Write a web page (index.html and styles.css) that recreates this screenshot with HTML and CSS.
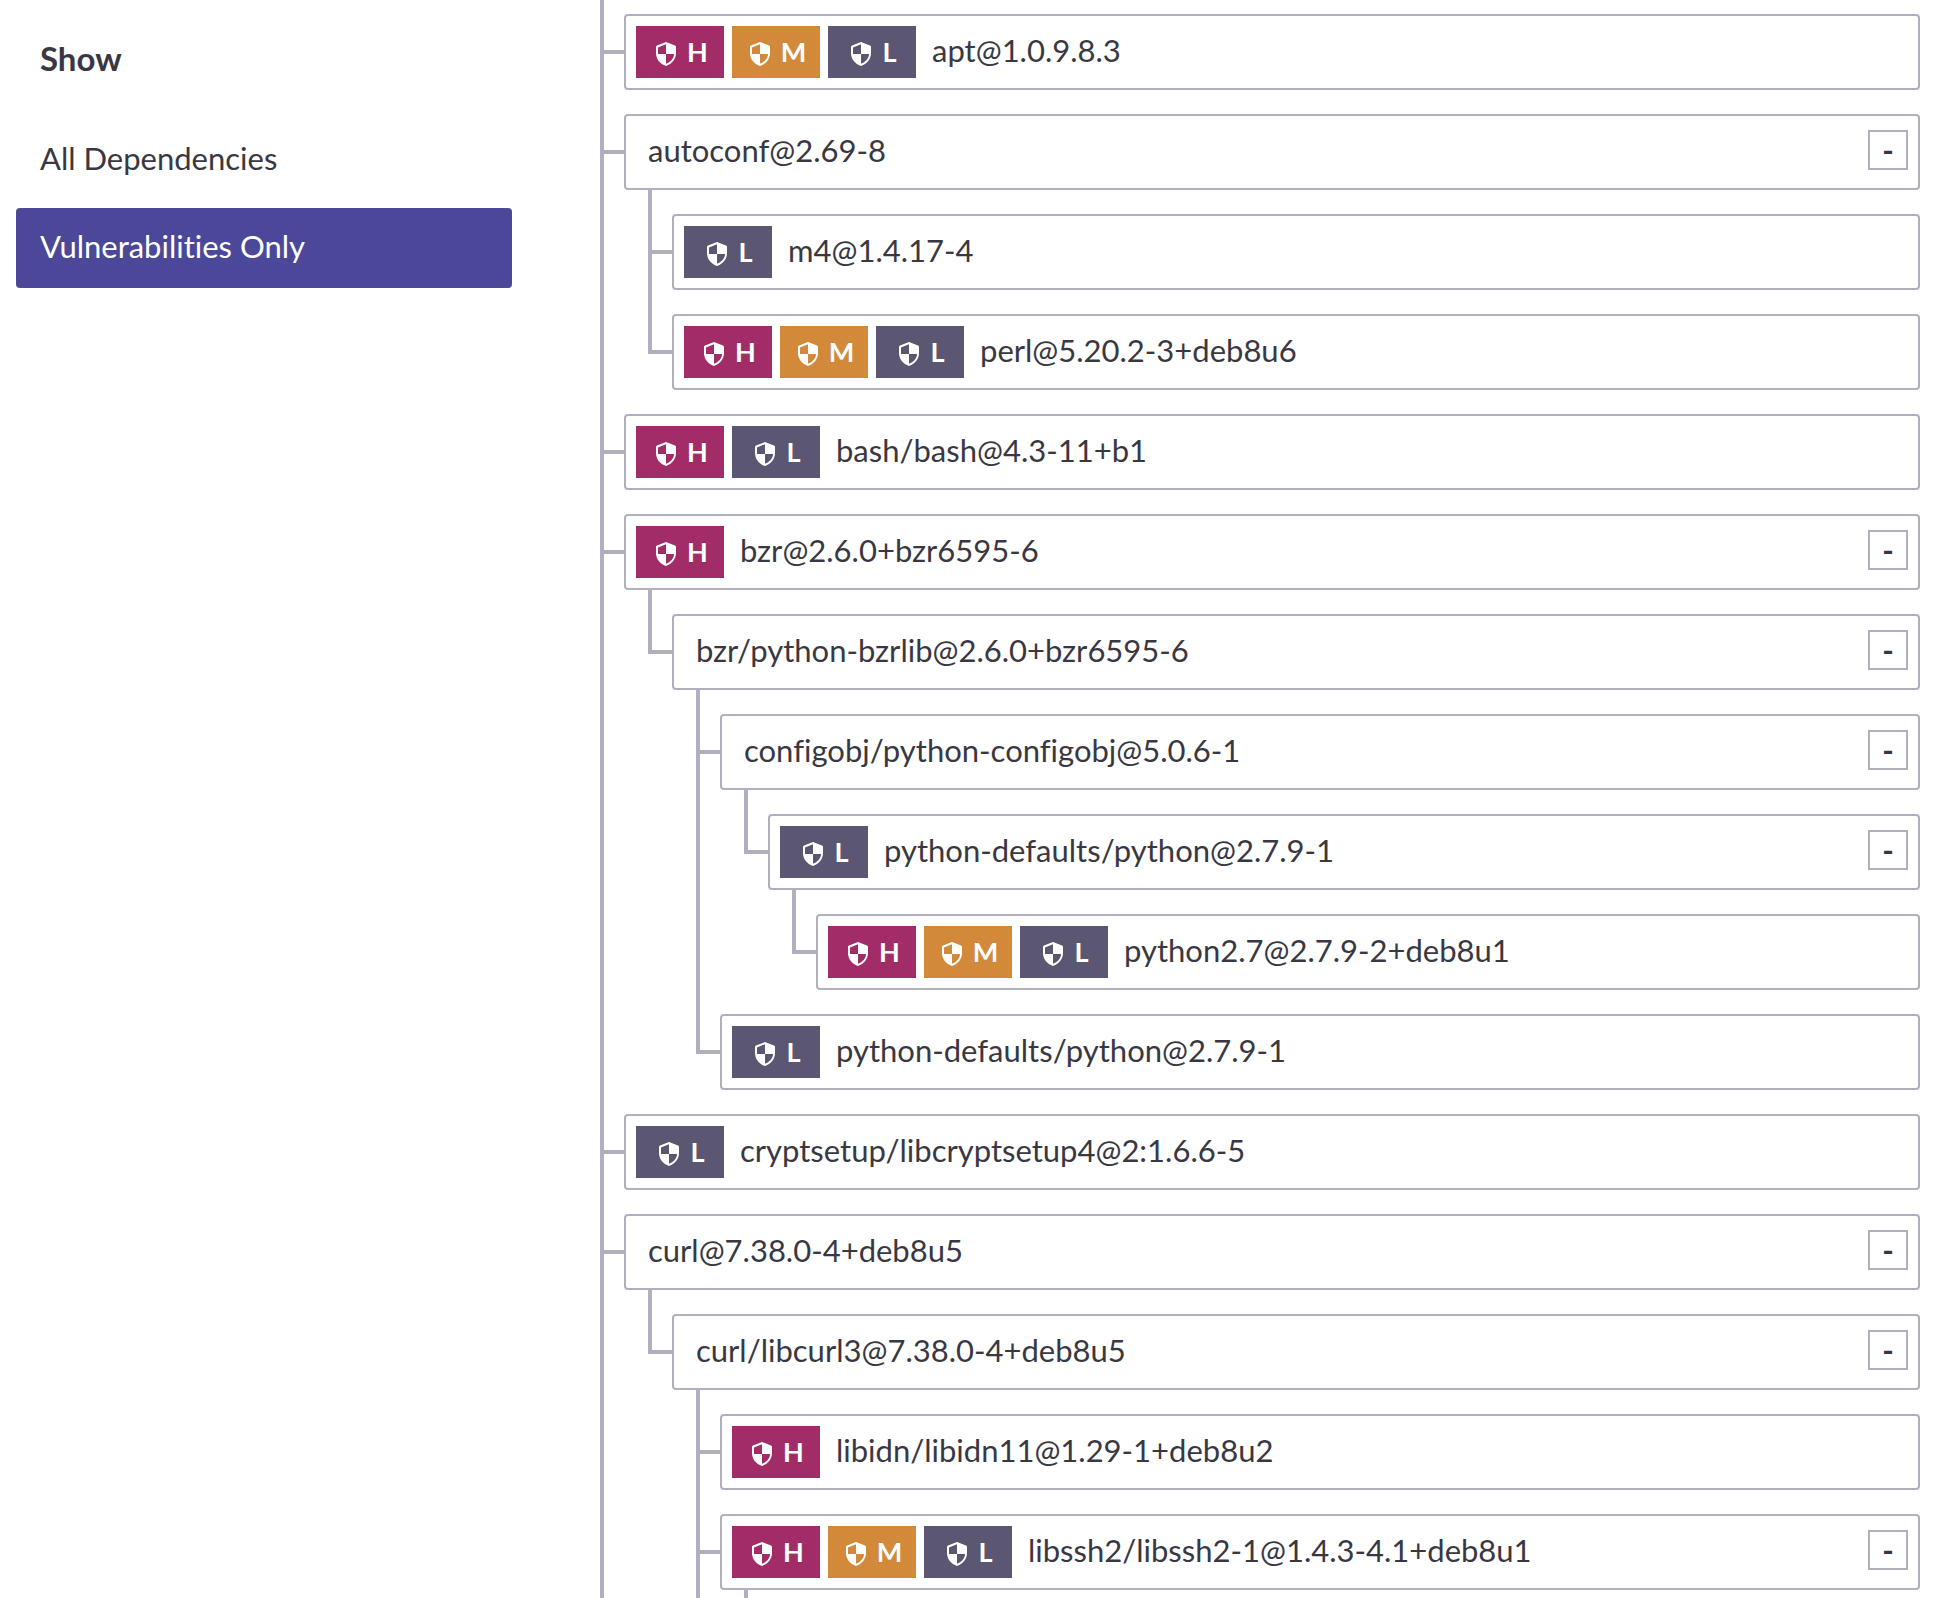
FILE: index.html
```html
<!DOCTYPE html>
<html lang="en">
<head>
<meta charset="utf-8">
<meta name="viewport" content="width=device-width, initial-scale=1">
<title>Dependencies</title>
<link rel="stylesheet" href="styles.css">
</head>
<body>
<svg class="sprite" aria-hidden="true">
  <symbol id="shield" viewBox="0 0 20 24">
    <path fill="currentColor" fill-rule="evenodd" d="M10 0 L19 3.6 Q20 4 20 5 V11 C20 17 16 22 10 24 C4 22 0 17 0 11 V5 Q0 4 1 3.6 Z M10 2.2 L2 5.4 V12 H10 Z M10 12 V21.8 C14.5 20 18 16.500 18 12 Z"/>
  </symbol>
</svg>
<div class="page">
  <nav class="sidebar" aria-labelledby="show-title">
    <h2 class="sidebar-title" id="show-title">Show</h2>
    <a class="filter" href="#all">All Dependencies</a>
    <a class="filter filter-active" href="#vulnerable" aria-current="true">Vulnerabilities Only</a>
  </nav>
  <main>
    <ul class="tree tree-root">
      <li class="node">
        <div class="card">
          <span class="badge high"><svg class="icon"><use href="#shield"/></svg>H</span>
          <span class="badge medium"><svg class="icon"><use href="#shield"/></svg>M</span>
          <span class="badge low"><svg class="icon"><use href="#shield"/></svg>L</span>
          <span class="name">apt@1.0.9.8.3</span>
        </div>
      </li>
      <li class="node">
        <div class="card">
          <span class="name">autoconf@2.69-8</span>
          <button class="toggle" type="button" aria-label="Collapse">-</button>
        </div>
        <ul class="tree">
          <li class="node">
            <div class="card">
              <span class="badge low"><svg class="icon"><use href="#shield"/></svg>L</span>
              <span class="name">m4@1.4.17-4</span>
            </div>
          </li>
          <li class="node">
            <div class="card">
              <span class="badge high"><svg class="icon"><use href="#shield"/></svg>H</span>
              <span class="badge medium"><svg class="icon"><use href="#shield"/></svg>M</span>
              <span class="badge low"><svg class="icon"><use href="#shield"/></svg>L</span>
              <span class="name">perl@5.20.2-3+deb8u6</span>
            </div>
          </li>
        </ul>
      </li>
      <li class="node">
        <div class="card">
          <span class="badge high"><svg class="icon"><use href="#shield"/></svg>H</span>
          <span class="badge low"><svg class="icon"><use href="#shield"/></svg>L</span>
          <span class="name">bash/bash@4.3-11+b1</span>
        </div>
      </li>
      <li class="node">
        <div class="card">
          <span class="badge high"><svg class="icon"><use href="#shield"/></svg>H</span>
          <span class="name">bzr@2.6.0+bzr6595-6</span>
          <button class="toggle" type="button" aria-label="Collapse">-</button>
        </div>
        <ul class="tree">
          <li class="node">
            <div class="card">
              <span class="name">bzr/python-bzrlib@2.6.0+bzr6595-6</span>
              <button class="toggle" type="button" aria-label="Collapse">-</button>
            </div>
            <ul class="tree">
              <li class="node">
                <div class="card">
                  <span class="name">configobj/python-configobj@5.0.6-1</span>
                  <button class="toggle" type="button" aria-label="Collapse">-</button>
                </div>
                <ul class="tree">
                  <li class="node">
                    <div class="card">
                      <span class="badge low"><svg class="icon"><use href="#shield"/></svg>L</span>
                      <span class="name">python-defaults/python@2.7.9-1</span>
                      <button class="toggle" type="button" aria-label="Collapse">-</button>
                    </div>
                    <ul class="tree">
                      <li class="node">
                        <div class="card">
                          <span class="badge high"><svg class="icon"><use href="#shield"/></svg>H</span>
                          <span class="badge medium"><svg class="icon"><use href="#shield"/></svg>M</span>
                          <span class="badge low"><svg class="icon"><use href="#shield"/></svg>L</span>
                          <span class="name">python2.7@2.7.9-2+deb8u1</span>
                        </div>
                      </li>
                    </ul>
                  </li>
                </ul>
              </li>
              <li class="node">
                <div class="card">
                  <span class="badge low"><svg class="icon"><use href="#shield"/></svg>L</span>
                  <span class="name">python-defaults/python@2.7.9-1</span>
                </div>
              </li>
            </ul>
          </li>
        </ul>
      </li>
      <li class="node">
        <div class="card">
          <span class="badge low"><svg class="icon"><use href="#shield"/></svg>L</span>
          <span class="name">cryptsetup/libcryptsetup4@2:1.6.6-5</span>
        </div>
      </li>
      <li class="node node-continues">
        <div class="card">
          <span class="name">curl@7.38.0-4+deb8u5</span>
          <button class="toggle" type="button" aria-label="Collapse">-</button>
        </div>
        <ul class="tree">
          <li class="node">
            <div class="card">
              <span class="name">curl/libcurl3@7.38.0-4+deb8u5</span>
              <button class="toggle" type="button" aria-label="Collapse">-</button>
            </div>
            <ul class="tree">
              <li class="node">
                <div class="card">
                  <span class="badge high"><svg class="icon"><use href="#shield"/></svg>H</span>
                  <span class="name">libidn/libidn11@1.29-1+deb8u2</span>
                </div>
              </li>
              <li class="node node-continues">
                <div class="card">
                  <span class="badge high"><svg class="icon"><use href="#shield"/></svg>H</span>
                  <span class="badge medium"><svg class="icon"><use href="#shield"/></svg>M</span>
                  <span class="badge low"><svg class="icon"><use href="#shield"/></svg>L</span>
                  <span class="name">libssh2/libssh2-1@1.4.3-4.1+deb8u1</span>
                  <button class="toggle" type="button" aria-label="Collapse">-</button>
                </div>
                <div class="stub"></div>
              </li>
            </ul>
          </li>
        </ul>
      </li>
    </ul>
  </main>
</div>
</body>
</html>
```
FILE: styles.css
```css
:root {
  --line: #b1afbd;
  --text: #393842;
  --accent: #4b4899;
  --high: #a22c68;
  --medium: #d2893a;
  --low: #5b5773;
}

* {
  box-sizing: border-box;
}

body {
  margin: 0;
  background: #fff;
  color: var(--text);
  font-family: Lato, "Noto Sans", sans-serif;
  font-size: 31px;
  line-height: 40px;
  font-variant-ligatures: none;
}

.sprite {
  display: none;
}

.page {
  display: grid;
  grid-template-columns: 496px minmax(0, 1fr);
  column-gap: 88px;
  padding: 0 34px 0 16px;
}

.sidebar {
  display: flex;
  flex-direction: column;
  gap: 8px;
  padding-top: 20px;
}

.sidebar-title {
  margin: 0 0 12px;
  padding: 18px 24px 22px;
  font-size: 33px;
  line-height: 40px;
  font-weight: 700;
}

.filter {
  padding: 18px 24px 22px;
  border-radius: 4px;
  color: inherit;
  text-decoration: none;
}

.filter-active {
  background: var(--accent);
  color: #fff;
}

.tree {
  margin: 0 0 0 24px;
  padding: 0;
  list-style: none;
}

.tree-root {
  margin: -10px 0 0;
}

.node {
  position: relative;
  padding: 24px 0 0 24px;
}

/* Trunk running down beside sibling nodes */
.node::before {
  content: "";
  position: absolute;
  top: 0;
  bottom: 0;
  left: 0;
  width: 4px;
  background: var(--line);
}

.node:last-child:not(.node-continues)::before {
  bottom: auto;
  height: 64px;
}

/* Branch from the trunk to the card */
.node::after {
  content: "";
  position: absolute;
  top: 60px;
  left: 0;
  width: 24px;
  height: 4px;
  background: var(--line);
}

.card {
  display: flex;
  align-items: flex-start;
  gap: 8px;
  min-height: 76px;
  padding: 10px;
  border: 2px solid var(--line);
  border-radius: 4px;
}

.badge {
  display: flex;
  align-items: center;
  justify-content: center;
  gap: 11px;
  flex: none;
  width: 88px;
  height: 52px;
  padding-left: 4px;
  color: #fff;
  font-size: 27px;
  font-weight: 700;
}

.high {
  background: var(--high);
}

.medium {
  background: var(--medium);
}

.low {
  background: var(--low);
}

.icon {
  width: 20px;
  height: 24px;
  margin-top: 4px;
}

.name {
  flex: 1;
  min-width: 0;
  padding: 4px 0 0 12px;
}

.badge + .name {
  padding-left: 8px;
}

.toggle {
  flex: none;
  width: 40px;
  height: 40px;
  margin-top: 4px;
  padding: 0;
  border: 2px solid var(--line);
  background: #fff;
  color: var(--text);
  font: 700 31px/32px Lato, "Noto Sans", sans-serif;
}

.stub {
  width: 4px;
  height: 8px;
  margin-left: 24px;
  background: var(--line);
}
```
